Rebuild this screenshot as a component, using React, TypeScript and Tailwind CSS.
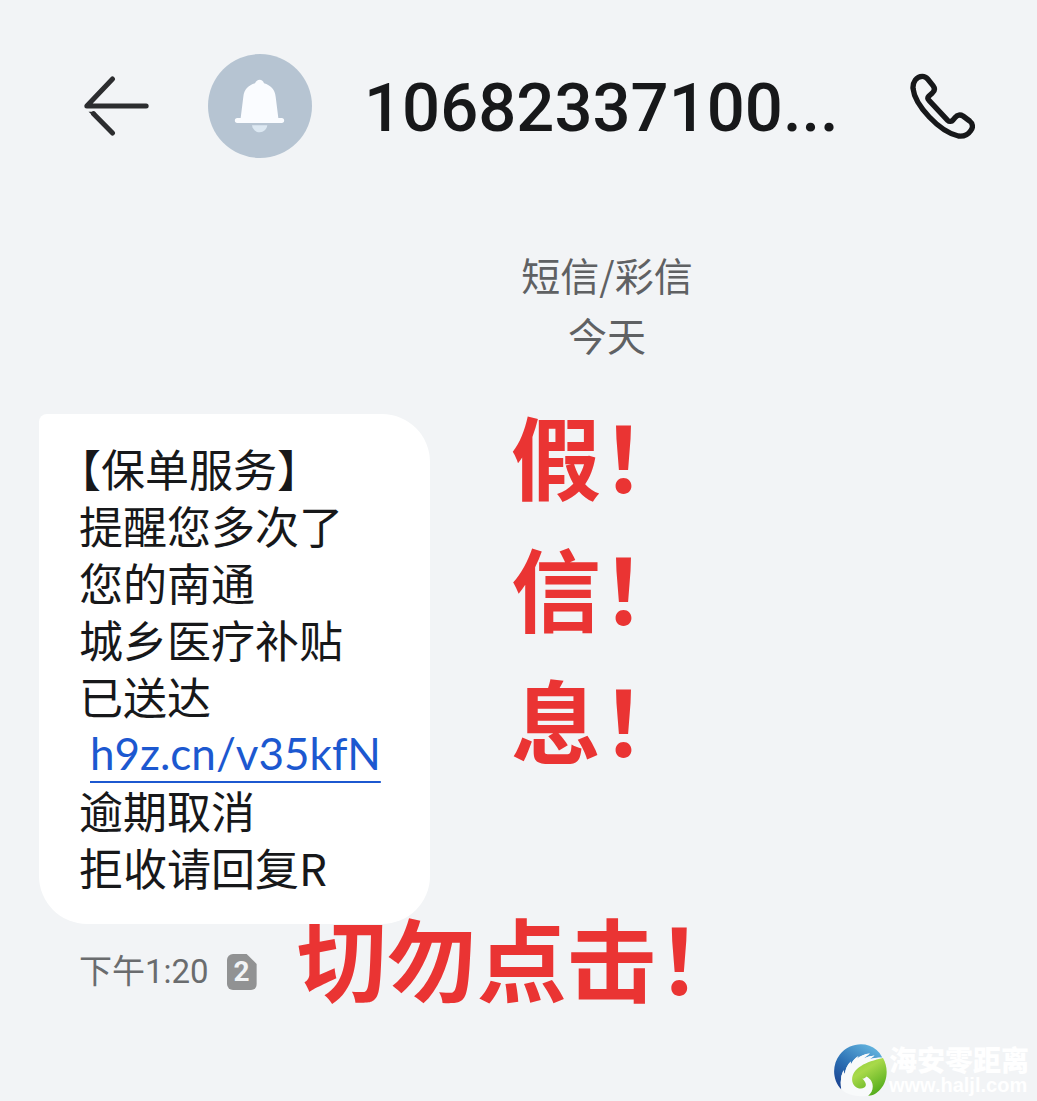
import React from 'react';

const messageLines = ['【保单服务】', '提醒您多次了', '您的南通', '城乡医疗补贴', '已送达'];
const messageTail = ['逾期取消', '拒收请回复R'];
const warningLines = ['假！', '信！', '息！'];

const BackIcon = () => (
  <svg viewBox="74 108 194 180" className="w-[65px] h-[60px]" fill="none" stroke="#2c2d2f" strokeWidth="15">
    <path d="M260 198H82L159 117" strokeLinecap="round" strokeLinejoin="round" />
    <path d="M159 279L102 221" strokeLinecap="round" />
    <path d="M87 215H107L110 224L99 226Z" fill="#2c2d2f" stroke="none" />
  </svg>
);

const PhoneIcon = () => (
  <svg viewBox="61 38 195 198" className="w-[65px] h-[66px]" fill="none" stroke="#17181a" strokeWidth="16" strokeLinejoin="round">
    <path d="M98 48C105 48 110 51 114 56L130 76C136 84 135 92 128 98L118 107C114 111 114 116 118 120L174 180C179 185 186 184 190 179L197 171C203 163 212 162 220 167L240 182C250 190 251 202 243 211C234 224 221 229 206 227C150 215 75 135 70 84C69 65 80 48 98 48Z" />
  </svg>
);

const BellAvatar = () => (
  <div className="shrink-0 w-[104px] h-[104px] rounded-full bg-[#b6c4d2]">
    <svg viewBox="444 42 312 312" className="w-full h-full">
      <path d="M576 256H622C620 268 611 277 599 277C587 277 578 268 576 256Z" fill="#dce8f2" />
      <path
        d="M599 119C605 119 610 123 612 130C632 136 645 149 647 170L655 234H665C675 234 675 249 665 249H532C522 249 522 234 532 234H542L550 170C552 149 565 136 585 130C588 123 593 119 599 119Z"
        fill="#fafcff"
      />
    </svg>
  </div>
);

const Watermark = () => (
  <div className="absolute right-2 bottom-1 flex items-center gap-0.5">
    <svg viewBox="44 42 158 158" className="w-[53px] h-[53px]">
      <defs>
        <linearGradient id="blue" x1="0" y1="1" x2="0.7" y2="0">
          <stop offset="0" stopColor="#173a8a" />
          <stop offset="0.5" stopColor="#2c70b4" />
          <stop offset="1" stopColor="#5fb0dc" />
        </linearGradient>
        <linearGradient id="green" x1="0" y1="0" x2="0.6" y2="1">
          <stop offset="0" stopColor="#8fd03c" />
          <stop offset="0.4" stopColor="#a8d94a" />
          <stop offset="1" stopColor="#55ad1c" />
        </linearGradient>
      </defs>
      <path
        d="M66 178C38 148 38 104 61 74C90 37 142 34 171 60Q182 69 188 82C175 82 164 84 151 87L165 76Q147 78 132 85L151 70Q128 72 112 86L117 78Q101 88 94 104L94 94Q79 108 76 132L72 120Q60 144 66 178Z"
        fill="url(#blue)"
      />
      <path
        d="M66 178Q60 144 72 120L76 132Q79 108 94 94V104Q101 88 117 78L112 86Q128 72 151 70L132 85Q147 78 165 76L151 87Q172 81 190 84C139 95 98 114 98 149C99 168 119 180 134 172C143 166 139 155 128 145C132 146 137 144 140 139C166 151 164 183 146 196C115 201 85 195 66 178Z"
        fill="#f8fafb"
      />
      <path
        d="M190 84C207 112 204 153 183 176C172 189 158 197 146 196C164 183 166 151 140 139C137 144 132 146 128 145C139 155 143 166 134 172C119 180 99 168 98 149C98 114 139 95 190 84Z"
        fill="url(#green)"
      />
    </svg>
    <div className="text-white">
      <p className="font-['Noto_Sans_CJK_SC',sans-serif] font-black text-[28px] leading-[28px]">海安零距离</p>
      <p className="font-['Liberation_Sans',sans-serif] font-bold text-[20px] leading-[24px]">www.haljl.com</p>
    </div>
  </div>
);

const App: React.FC = () => {
  return (
    <div className="relative min-h-screen overflow-hidden bg-[#f2f4f6] pb-20 font-['Noto_Sans_CJK_SC',sans-serif] text-[#17181a]">
      <header className="flex items-center pt-[54px] pl-[84px] pr-[62px]">
        <button type="button" aria-label="返回" className="shrink-0">
          <BackIcon />
        </button>
        <div className="ml-[59px]">
          <BellAvatar />
        </div>
        <h1 className="flex-1 ml-[52px] pt-1 whitespace-nowrap font-[Roboto,sans-serif] font-medium text-[67px] leading-[100px]">
          10682337100...
        </h1>
        <button type="button" aria-label="拨打电话" className="shrink-0">
          <PhoneIcon />
        </button>
      </header>

      <div className="mt-[86px] pl-[177px] text-center text-[39px] leading-[60px] text-[#5f6163]">
        <p>短信/彩信</p>
        <p>今天</p>
      </div>

      <main className="mt-[50px] pl-[39px]">
        <div className="flex items-start">
          <div className="relative z-10 shrink-0 w-[391px] pt-[26px] pb-7 pl-10 bg-white rounded-[48px] rounded-tl-lg text-[44px] leading-[57px] [font-feature-settings:'halt']">
            {messageLines.map((line) => (
              <p key={line}>{line}</p>
            ))}
            <p className="pl-[11px] font-[Lato,sans-serif]">
              <a href="#link" className="block w-fit h-[57px] text-[#1c58d0] underline decoration-[2px] underline-offset-[11px]">
                h9z.cn/v35kfN
              </a>
            </p>
            {messageTail.map((line) => (
              <p key={line}>{line}</p>
            ))}
          </div>
          <div className="ml-[81px] -mt-[26px] text-[90px] leading-[132px] font-bold text-[#ea3433]">
            {warningLines.map((line) => (
              <p key={line}>{line}</p>
            ))}
          </div>
        </div>

        <div className="flex items-start pl-10">
          <div className="flex items-center h-24">
            <time className="font-[Roboto,'Noto_Sans_CJK_SC',sans-serif] text-[33px] text-[#6a6c6e]">下午1:20</time>
            <span className="ml-[18px] w-[30px] h-9 rounded-md bg-[#919293] text-center font-[Roboto,sans-serif] text-[28px] leading-9 font-bold text-[#f2f4f6] [clip-path:polygon(0_0,20px_0,100%_10px,100%_100%,0_100%)]">
              2
            </span>
          </div>
          <strong className="ml-10 -mt-4 text-[90px] leading-[96px] text-[#ea3433]">切勿点击！</strong>
        </div>
      </main>

      <Watermark />
    </div>
  );
};

export default App;
